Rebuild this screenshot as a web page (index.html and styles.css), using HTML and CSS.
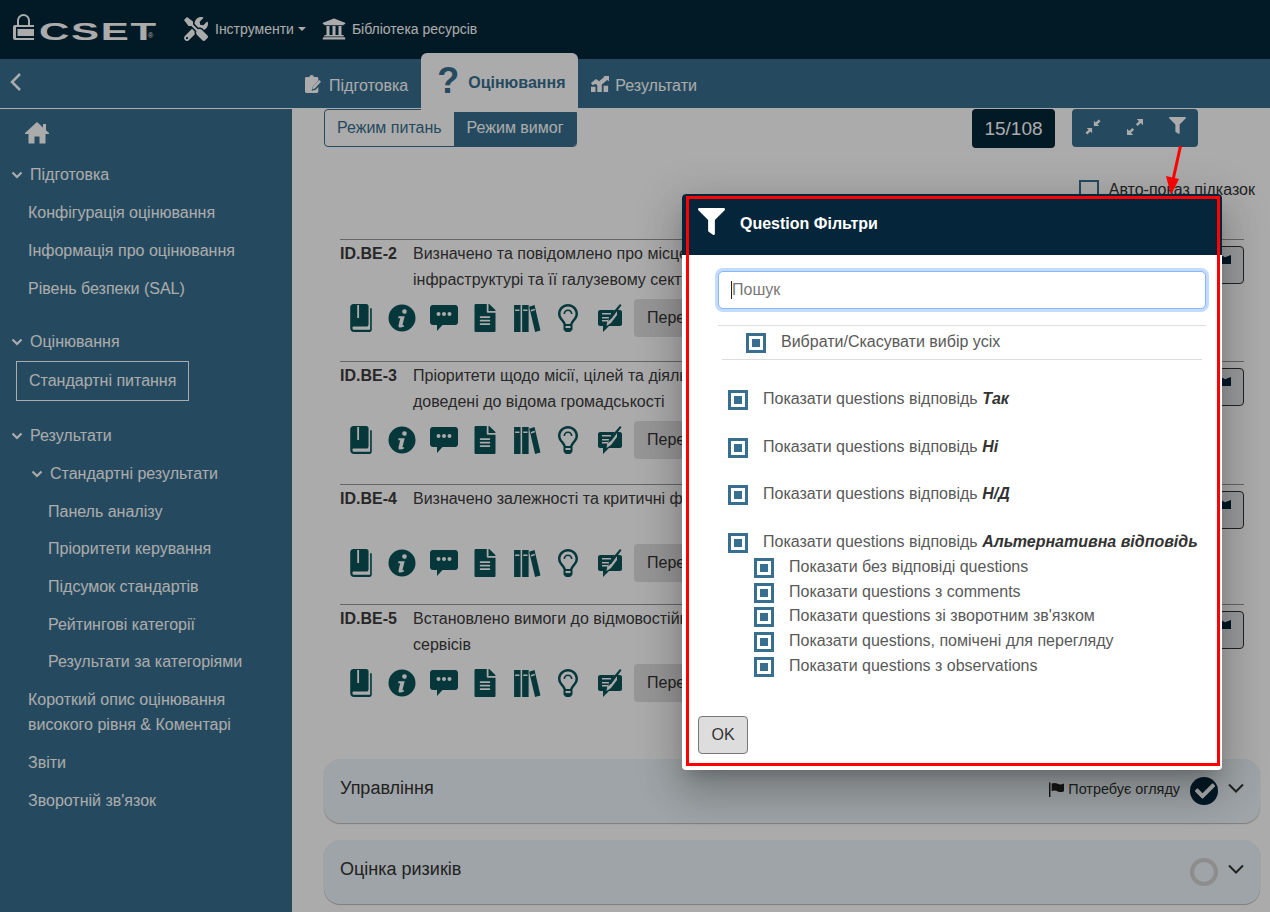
FILE: index.html
```html
<!DOCTYPE html>
<html>
<head>
<meta charset="utf-8">
<title>CSET</title>
<link rel="stylesheet" href="styles.css">
</head>
<body>

<svg class="defs" width="0" height="0">
	<symbol id="i-filter" viewBox="0 0 512 512"><path d="M487.976 0H24.028C2.71 0-8.047 25.866 7.058 40.971L192 225.941V432c0 7.831 3.821 15.17 10.237 19.662l80 55.98C298.02 518.69 320 507.493 320 487.98V225.941l184.947-184.97C520.021 25.896 509.338 0 487.976 0z"/></symbol>
	<symbol id="i-home" viewBox="0 0 24 22"><path d="M12 0l6 5.500V2h3v6.300L24 11v1h-3.500v9.500h-6V14.500h-5v7h-6V12H0v-1z"/></symbol>
	<symbol id="i-check" viewBox="0 0 512 512"><path d="M173.898 439.404l-166.4-166.4c-9.997-9.997-9.997-26.206 0-36.204l36.203-36.204c9.997-9.998 26.207-9.998 36.204 0L192 312.69 432.095 72.596c9.997-9.997 26.207-9.997 36.204 0l36.203 36.204c9.997 9.997 9.997 26.206 0 36.204l-294.4 294.401c-9.998 9.997-26.207 9.997-36.204-.001z"/></symbol>
	<symbol id="i-flag" viewBox="0 0 512 512"><path d="M0 20h50v492H0zM90 50c70-25 140-25 210 10s120 30 212-5v260c-92 35-142 40-212 5s-140-35-210-10z"/></symbol>
	<symbol id="i-tools" viewBox="0 0 512 512"><path d="M501.1 395.7L384 278.6c-23.1-23.1-57.6-27.6-85.4-13.9L192 158.1V96L64 0 0 64l96 128h62.1l106.6 106.6c-13.6 27.8-9.2 62.3 13.9 85.4l117.1 117.1c14.6 14.6 38.2 14.6 52.7 0l52.7-52.7c14.5-14.6 14.5-38.2 0-52.7zM331.7 225c28.3 0 54.9 11 74.9 31l19.4 19.4c15.8-6.9 30.8-16.5 43.8-29.5 37.1-37.1 49.7-89.3 37.9-136.7-2.2-9-13.5-12.1-20.1-5.5l-74.4 74.4-67.9-11.3L334 98.9l74.4-74.4c6.6-6.6 3.4-17.9-5.7-20.2-47.4-11.7-99.6.9-136.6 37.9-28.5 28.5-41.9 66.1-41.2 103.6l82.1 82.1c8.1-1.9 16.5-2.9 24.7-2.9zm-103.9 82l-56.7-56.7L18.7 402.8c-25 25-25 65.5 0 90.5s65.5 25 90.5 0l123.6-123.6c-7.6-19.9-9.9-41.6-5-62.7zM64 472c-13.2 0-24-10.8-24-24 0-13.3 10.7-24 24-24s24 10.7 24 24c0 13.2-10.7 24-24 24z"/></symbol>
	<symbol id="i-library" viewBox="0 0 512 512"><path d="M496 128v16a8 8 0 0 1-8 8h-24v12c0 6.627-5.373 12-12 12H60c-6.627 0-12-5.373-12-12v-12H24a8 8 0 0 1-8-8v-16a8 8 0 0 1 4.941-7.392l232-88a7.996 7.996 0 0 1 6.118 0l232 88A8 8 0 0 1 496 128zm-24 304H40c-13.255 0-24 10.745-24 24v16a8 8 0 0 0 8 8h464a8 8 0 0 0 8-8v-16c0-13.255-10.745-24-24-24zM96 192v192H60c-6.627 0-12 5.373-12 12v20h416v-20c0-6.627-5.373-12-12-12h-36V192h-64v192h-64V192h-64v192h-64V192H96z"/></symbol>
	<symbol id="i-file" viewBox="0 0 384 512"><path d="M224 136V0H24C10.7 0 0 10.7 0 24v464c0 13.3 10.7 24 24 24h336c13.3 0 24-10.7 24-24V160H248c-13.2 0-24-10.8-24-24zm64 236c0 6.6-5.4 12-12 12H108c-6.6 0-12-5.4-12-12v-8c0-6.6 5.4-12 12-12h168c6.6 0 12 5.4 12 12v8zm0-64c0 6.6-5.4 12-12 12H108c-6.6 0-12-5.4-12-12v-8c0-6.6 5.4-12 12-12h168c6.6 0 12 5.4 12 12v8zm0-72v8c0 6.6-5.4 12-12 12H108c-6.6 0-12-5.4-12-12v-8c0-6.6 5.4-12 12-12h168c6.6 0 12 5.4 12 12zm96-114.1v6.1H256V0h6.1c6.4 0 12.5 2.500 17 7l97.9 98c4.5 4.5 7 10.6 7 16.9z"/></symbol>
	<symbol id="i-book" viewBox="0 0 20 26"><path fill-rule="evenodd" d="M3 0h12c1.100 0 2 .9 2 2v17c0 1.100-.9 2-2 2H3.500c-.8 0-1.500.5-1.500 1.200S2.700 24 3.500 24H18.500V4H20v20c0 1.100-.9 2-2 2H3.500C1.500 26 0 24.500 0 22.500V3c0-1.700 1.300-3 3-3zM6.500 1v12H8.200V1z"/></symbol>
	<symbol id="i-info" viewBox="0 0 28 28"><circle cx="14" cy="14" r="13.500"/><path class="cut" d="M16.200 5.200a2.300 2.300 0 1 1-.4 4.500 2.300 2.300 0 0 1 .4-4.500zM10.500 12.200h6.200l-2.300 9h1.700l-.4 1.600c-1.200.5-2.300.7-3.300.7-1.600 0-2.200-1-1.800-2.600l1.600-6.700h-2z"/></symbol>
	<symbol id="i-comment" viewBox="0 0 28 26"><path d="M3 0h22c1.700 0 3 1.300 3 3v14c0 1.700-1.300 3-3 3H12.500L7 26v-6H3c-1.700 0-3-1.300-3-3V3c0-1.700 1.300-3 3-3z"/><circle class="cut" cx="8.500" cy="9" r="2"/><circle class="cut" cx="14" cy="9" r="2"/><circle class="cut" cx="19.500" cy="9" r="2"/></symbol>
	<symbol id="i-books" viewBox="0 0 24 26"><path d="M0 1h6v25H0zM7.500 1h6v25h-6zM14 2.500l5-1.500L24.500 24.500l-5 1.500z"/><path class="cut" d="M1 5h4v1.500H1zM8.500 5h4v1.500h-4zM15.500 5.500l3.500-1 .4 1.400-3.500 1z"/></symbol>
	<symbol id="i-bulb" viewBox="0 0 20 28"><path d="M10 0C4.500 0 0 4.400 0 9.800c0 3.400 1.800 5.300 3.300 7.100 1 1.200 1.800 2.300 2.200 3.600V25c0 .5.200.9.500 1.200l1.200 1.300c.3.300.7.500 1.100.5h3.400c.4 0 .8-.2 1.100-.5l1.200-1.300c.3-.3.500-.7.500-1.200v-4.500c.4-1.300 1.200-2.400 2.200-3.600C18.200 15.100 20 13.200 20 9.800 20 4.400 15.500 0 10 0zm2.500 24H7.500v-2h5zm2.500-8.800c-1.100 1.300-2.300 2.800-2.900 4.800H7.900c-.6-2-1.800-3.500-2.900-4.800C3.600 13.600 2.500 12.100 2.500 9.800c0-4 3.400-7.300 7.500-7.300s7.500 3.300 7.500 7.300c0 2.300-1.100 3.800-2.500 5.400z"/><path d="M5.500 10c0-2.500 2-4.500 4.500-4.500 2.500 0 4.500 2 4.500 4.500h-1.600c0-1.600-1.300-2.900-2.900-2.900S7.100 8.400 7.100 10z"/></symbol>
	<symbol id="i-note" viewBox="0 0 24 28"><path d="M2 6h15l-5 7H4v1.500h7.200L10 16H4v1.500h5.300L8.500 22l4.500-3 6-8V6h3c1 0 2 1 2 2v12c0 1-1 2-2 2H11l-6 6v-6H2c-1 0-2-1-2-2V8c0-1 1-2 2-2zM4 9v1.500h9V9z"/><path d="M22 0l1.500 1.200-10 13.300-3.300 2.700.8-4.200z"/></symbol>
	<symbol id="i-clipboard" viewBox="0 0 18 20"><path d="M1.500 2H5c.3-1.200 1.200-2 2.500-2S9.700.8 10 2h3.500c.8 0 1.500.7 1.500 1.500V6L8.500 13l-1 4.500 4.500-1 3-3v5c0 .8-.7 1.500-1.500 1.500h-12C.7 20 0 19.300 0 18.500v-15C0 2.700.7 2 1.500 2z"/><path d="M16 5.500l2 2-7 7.500-3 .8.800-3z"/></symbol>
	<symbol id="i-chart" viewBox="0 0 20 18"><path d="M0 12h5v6H0zM7 9h5v9H7zM14 11h5v7h-5z"/><path d="M0 8l5.500-4.500L9 6l6-5-1.500-1H20v6l-2-1.500-9 7.500-3.500-3L1.500 10z"/></symbol>
	<symbol id="i-compress" viewBox="0 0 18 18"><path d="M10 2v6h6l-2-2 3.500-3.500L15.500 .5 12 4zM8 16v-6H2l2 2L.5 15.500l2 2L6 14z"/></symbol>
	<symbol id="i-expand" viewBox="0 0 18 18"><path d="M18 0v7l-2.500-2.500L12 8l-2-2 3.500-3.500L11 0zM0 18v-7l2.500 2.500L6 10l2 2-3.500 3.500L7 18z"/></symbol>
</svg>

<div class="app">

	<header class="topbar">
		<a class="logo">
			<svg class="logo-lock" viewBox="0 0 21 26"><path class="logo-shackle" d="M5 11V6.500a5.500 5.500 0 0 1 11 0V11"/><path fill-rule="evenodd" d="M2 11h19v2H3v11h18v2H2c-1.100 0-2-.9-2-2V13c0-1.100.9-2 2-2zM4.500 15H21v7H4.500z"/></svg>
			<span class="logo-text">CSET</span><span class="logo-reg">®</span>
		</a>
		<a class="top-link top-link-tools"><svg class="top-icon"><use href="#i-tools"/></svg>Інструменти<i class="caret"></i></a>
		<a class="top-link"><svg class="top-icon"><use href="#i-library"/></svg>Бібліотека ресурсів</a>
	</header>

	<nav class="tabbar">
		<div class="tabbar-side">
			<svg class="back" viewBox="0 0 12 20"><path d="M10 2L2 10l8 8"/></svg>
		</div>
		<a class="tab"><svg class="tab-icon"><use href="#i-clipboard"/></svg>Підготовка</a>
		<a class="tab tab-active"><span class="tab-q">?</span>Оцінювання</a>
		<a class="tab tab-last"><svg class="tab-icon tab-icon-wide"><use href="#i-chart"/></svg>Результати</a>
	</nav>

	<div class="body">
		<aside class="sidebar">
			<svg class="home"><use href="#i-home"/></svg>
			<div class="side-group"><svg class="chev" viewBox="0 0 12 8"><path d="M1.500 1.500L6 6l4.500-4.500"/></svg>Підготовка</div>
			<a class="side-link">Конфігурація оцінювання</a>
			<a class="side-link">Інформація про оцінювання</a>
			<a class="side-link">Рівень безпеки (SAL)</a>
			<div class="side-group side-group-gap"><svg class="chev" viewBox="0 0 12 8"><path d="M1.500 1.500L6 6l4.500-4.500"/></svg>Оцінювання</div>
			<a class="side-current">Стандартні питання</a>
			<div class="side-group side-group-after"><svg class="chev" viewBox="0 0 12 8"><path d="M1.500 1.500L6 6l4.500-4.500"/></svg>Результати</div>
			<div class="side-sub"><svg class="chev" viewBox="0 0 12 8"><path d="M1.500 1.500L6 6l4.500-4.500"/></svg>Стандартні результати</div>
			<a class="side-link side-deep">Панель аналізу</a>
			<a class="side-link side-deep">Пріоритети керування</a>
			<a class="side-link side-deep">Підсумок стандартів</a>
			<a class="side-link side-deep">Рейтингові категорії</a>
			<a class="side-link side-deep">Результати за категоріями</a>
			<a class="side-link side-two">Короткий опис оцінювання високого рівня &amp; Коментарі</a>
			<a class="side-link">Звіти</a>
			<a class="side-link">Зворотній зв'язок</a>
		</aside>

		<main class="main">
			<div class="toolbar">
				<div class="modes">
					<a class="mode">Режим питань</a>
					<a class="mode mode-on">Режим вимог</a>
				</div>
				<div class="counter">15/108</div>
				<div class="tools">
					<a class="tool"><svg><use href="#i-compress"/></svg></a>
					<a class="tool"><svg><use href="#i-expand"/></svg></a>
					<a class="tool"><svg class="tool-filter"><use href="#i-filter"/></svg></a>
				</div>
			</div>

			<div class="autohint"><span class="autohint-box"></span>Авто-показ підказок</div>

			<div class="questions">
				<div class="question">
					<div class="q-left">
						<div class="q-head"><b class="q-id">ID.BE-2</b><p>Визначено та повідомлено про місце організації в критичній<br>інфраструктурі та її галузевому секторі</p></div>
						<div class="q-tools">
							<svg><use href="#i-book"/></svg><svg><use href="#i-info"/></svg><svg><use href="#i-comment"/></svg><svg><use href="#i-file"/></svg><svg><use href="#i-books"/></svg><svg><use href="#i-bulb"/></svg><svg><use href="#i-note"/></svg>
							<a class="q-review">Переглянути</a>
						</div>
					</div>
					<a class="q-mark"><i></i></a>
				</div>
				<div class="question question-tall">
					<div class="q-left">
						<div class="q-head"><b class="q-id">ID.BE-3</b><p>Пріоритети щодо місії, цілей та діяльності організації визначені та<br>доведені до відома громадськості</p></div>
						<div class="q-tools">
							<svg><use href="#i-book"/></svg><svg><use href="#i-info"/></svg><svg><use href="#i-comment"/></svg><svg><use href="#i-file"/></svg><svg><use href="#i-books"/></svg><svg><use href="#i-bulb"/></svg><svg><use href="#i-note"/></svg>
							<a class="q-review">Переглянути</a>
						</div>
					</div>
					<a class="q-mark"><i></i></a>
				</div>
				<div class="question question-short">
					<div class="q-left">
						<div class="q-head"><b class="q-id">ID.BE-4</b><p>Визначено залежності та критичні функції</p></div>
						<div class="q-tools">
							<svg><use href="#i-book"/></svg><svg><use href="#i-info"/></svg><svg><use href="#i-comment"/></svg><svg><use href="#i-file"/></svg><svg><use href="#i-books"/></svg><svg><use href="#i-bulb"/></svg><svg><use href="#i-note"/></svg>
							<a class="q-review">Переглянути</a>
						</div>
					</div>
					<a class="q-mark"><i></i></a>
				</div>
				<div class="question">
					<div class="q-left">
						<div class="q-head"><b class="q-id">ID.BE-5</b><p>Встановлено вимоги до відмовостійкості для надання критичних<br>сервісів</p></div>
						<div class="q-tools">
							<svg><use href="#i-book"/></svg><svg><use href="#i-info"/></svg><svg><use href="#i-comment"/></svg><svg><use href="#i-file"/></svg><svg><use href="#i-books"/></svg><svg><use href="#i-bulb"/></svg><svg><use href="#i-note"/></svg>
							<a class="q-review">Переглянути</a>
						</div>
					</div>
					<a class="q-mark"><i></i></a>
				</div>
			</div>

			<div class="panel panel-first">
				<span class="panel-title">Управління</span>
				<span class="panel-flag"><svg><use href="#i-flag"/></svg>Потребує огляду</span>
				<span class="panel-done"><svg><use href="#i-check"/></svg></span>
				<svg class="panel-chev" viewBox="0 0 16 10"><path d="M1 1.500l7 7 7-7"/></svg>
			</div>
			<div class="panel">
				<span class="panel-title">Оцінка ризиків</span>
				<span class="panel-open"></span>
				<svg class="panel-chev" viewBox="0 0 16 10"><path d="M1 1.500l7 7 7-7"/></svg>
			</div>
		</main>
	</div>
</div>

<div class="overlay"></div>

<svg class="arrow" viewBox="0 0 30 50"><path d="M17.500 0L10 34" stroke="#f00" stroke-width="3"/><path d="M3 30l13 3-8 16z" fill="#f00"/></svg>

<div class="modal">
	<div class="modal-head"><svg><use href="#i-filter"/></svg><span>Question Фільтри</span></div>
	<div class="modal-body">
		<div class="search"><input type="text" placeholder="Пошук"><i class="search-caret"></i></div>
		<div class="select-all">
			<label class="opt"><span class="cb"></span>Вибрати/Скасувати вибір усіх</label>
		</div>
		<div class="opts">
			<label class="opt"><span class="cb"></span>Показати questions відповідь&nbsp;<em>Так</em></label>
			<label class="opt"><span class="cb"></span>Показати questions відповідь&nbsp;<em>Ні</em></label>
			<label class="opt"><span class="cb"></span>Показати questions відповідь&nbsp;<em>Н/Д</em></label>
			<label class="opt"><span class="cb"></span>Показати questions відповідь&nbsp;<em>Альтернативна відповідь</em></label>
		</div>
		<div class="subopts">
			<label class="opt"><span class="cb"></span>Показати без відповіді questions</label>
			<label class="opt"><span class="cb"></span>Показати questions з comments</label>
			<label class="opt"><span class="cb"></span>Показати questions зі зворотним зв'язком</label>
			<label class="opt"><span class="cb"></span>Показати questions, помічені для перегляду</label>
			<label class="opt"><span class="cb"></span>Показати questions з observations</label>
		</div>
	</div>
	<button class="ok">OK</button>
	<div class="red-frame"></div>
</div>

</body>
</html>
```

FILE: styles.css
```css
* {
	margin: 0;
	padding: 0;
	box-sizing: border-box;
}

html, body {
	height: 912px;
	overflow: hidden;
}

body {
	position: relative;
	font-family: "Liberation Sans", Arial, sans-serif;
	font-size: 16px;
	color: #3c3c3c;
	background: #fff;
}

.defs {
	position: absolute;
}

.app {
	display: flex;
	flex-direction: column;
	height: 912px;
}

/* top bar */
.topbar {
	display: flex;
	align-items: center;
	height: 59px;
	flex: none;
	padding: 0 0 2px 13px;
	background: #032639;
	color: #fff;
}

.logo {
	display: flex;
	align-items: center;
	width: 171px;
	fill: #fff;
}

.logo-lock {
	width: 21px;
	height: 26px;
	margin-top: -3px;
	flex: none;
}

.logo-shackle {
	fill: none;
	stroke: #fff;
	stroke-width: 2;
}

.logo-text {
	display: inline-block;
	width: 68px;
	margin: 6px 0 0 5px;
	font-size: 24px;
	line-height: 27px;
	font-weight: bold;
	letter-spacing: 1px;
	transform: scaleX(1.75);
	transform-origin: left center;
}

.logo-reg {
	font-size: 7px;
	line-height: 8px;
	margin: 14px 0 0 41px;
}

.top-link {
	display: flex;
	align-items: center;
	font-size: 14px;
	margin-right: 16px;
}

.top-icon {
	width: 24px;
	height: 24px;
	margin-right: 7px;
	fill: #fff;
}

.top-link:last-child .top-icon {
	margin-right: 6px;
}

.caret {
	width: 0;
	height: 0;
	margin-left: 4px;
	border: 4px solid transparent;
	border-top-color: #fff;
	border-bottom: 0;
}

/* tab bar */
.tabbar {
	display: flex;
	align-items: center;
	height: 50px;
	flex: none;
	background: #386f8f;
	color: #fff;
	border-bottom: 1px solid #fff;
}

.tabbar-side {
	width: 292px;
	padding-left: 10px;
}

.back {
	display: block;
	width: 12px;
	height: 20px;
	fill: none;
	stroke: #fff;
	stroke-width: 2.500;
	margin-top: -4px;
}

.tab {
	display: flex;
	align-items: center;
	padding: 4px 13px 0 13px;
	height: 49px;
}

.tab-icon {
	width: 16px;
	height: 18px;
	margin-right: 8px;
	fill: #fff;
	margin-top: -4px;
}

.tab-icon-wide {
	width: 18px;
	margin-right: 6px;
}

.tab-active {
	position: relative;
	z-index: 1;
	align-self: flex-start;
	height: 59px;
	margin: -6px 0 -4px 0;
	width: 157px;
	padding: 0 0 0 16px;
	border-radius: 6px 6px 0 0;
	background: #fff;
	color: #386f8f;
	font-weight: bold;
}

.tab-q {
	font-size: 36px;
	line-height: 44px;
	margin: -4px 9px 0 0;
}

/* layout below the bars */
.body {
	display: flex;
	flex: 1;
	min-height: 0;
}

.sidebar {
	width: 292px;
	flex: none;
	padding: 13px 0 0;
	background: #386f8f;
	color: #fff;
}

.home {
	display: block;
	width: 24px;
	height: 22px;
	margin: 0 0 12px 25px;
	fill: #fff;
}

.chev {
	width: 12px;
	height: 8px;
	margin-right: 7px;
	fill: none;
	stroke: #fff;
	stroke-width: 2.200;
	flex: none;
}

.side-group {
	display: flex;
	align-items: center;
	height: 38px;
	padding-left: 11px;
}

.side-group-gap {
	margin-top: 15px;
}

.side-group-after {
	margin-top: 16px;
}

.side-sub {
	display: flex;
	align-items: center;
	height: 38px;
	padding-left: 31px;
}

.side-link {
	display: flex;
	align-items: center;
	height: 38px;
	padding-left: 28px;
}

.side-deep {
	height: 37.600px;
	padding-left: 48px;
}

.side-two {
	height: auto;
	padding: 6px 40px 7px 28px;
	line-height: 25px;
}

.side-current {
	display: flex;
	align-items: center;
	width: 173px;
	height: 40px;
	margin-left: 16px;
	padding-left: 12px;
	border: 1px solid #fff;
}

/* main column */
.main {
	flex: 1;
	min-width: 0;
	padding: 0 10px 0 32px;
	overflow: hidden;
}

.toolbar {
	display: flex;
	align-items: flex-start;
	height: 39px;
}

.modes {
	display: flex;
	width: 253px;
	height: 38px;
	border: 1px solid #386f8f;
	border-radius: 4px;
	overflow: hidden;
	color: #386f8f;
	margin-right: auto;
}

.mode {
	display: flex;
	align-items: center;
	padding: 0 12px 1px;
}

.mode-on {
	flex: 1;
	padding-left: 13px;
	background: #386f8f;
	color: #fff;
}

.counter {
	display: flex;
	align-items: center;
	justify-content: center;
	width: 83px;
	height: 39px;
	margin-right: 17px;
	border-radius: 4px;
	background: #032639;
	color: #fff;
	font-size: 19px;
}

.tools {
	display: flex;
	height: 38px;
	margin-right: 62px;
	border-radius: 4px;
	background: #386f8f;
}

.tool {
	display: flex;
	align-items: center;
	justify-content: center;
	width: 42px;
	padding-bottom: 2px;
}

.tool svg {
	width: 16px;
	height: 16px;
	fill: #fff;
}

.tool .tool-filter {
	width: 17px;
	height: 17px;
	margin-bottom: 3px;
}

.autohint {
	display: flex;
	align-items: center;
	justify-content: flex-end;
	height: 20px;
	margin-top: 32px;
	padding-right: 5px;
	color: #333;
}

.autohint-box {
	width: 20px;
	height: 20px;
	margin-right: 10px;
	border: 2px solid #386f8f;
}

.questions {
	margin-top: 39px;
	padding: 0 16px;
}

.question {
	display: flex;
	height: 122px;
	border-top: 1px solid #999;
}

.question-tall {
	height: 123px;
}

.question-short {
	height: 120px;
}

.q-left {
	flex: 1;
	min-width: 0;
}

.q-head {
	display: flex;
	height: 53px;
	padding-top: 1px;
	line-height: 26px;
}

.q-id {
	width: 73px;
	flex: none;
}

.q-tools {
	display: flex;
	align-items: center;
	height: 38px;
	margin-top: 6px;
}

.q-tools svg {
	width: 28px;
	height: 28px;
	margin: 0 6.750px;
	fill: #0a5358;
}

.cut {
	fill: #fff;
}

.q-review {
	display: flex;
	align-items: center;
	height: 38px;
	padding: 0 13px;
	margin-left: 3.500px;
	border-radius: 4px;
	background: #e0e0e0;
	color: #333;
}

.q-mark {
	display: flex;
	align-items: flex-start;
	justify-content: flex-end;
	width: 38px;
	height: 38px;
	margin-top: 6px;
	padding: 8px 12px 0 0;
	border: 1px solid #333;
	border-radius: 4px;
	background: #e4e7e9;
}

.q-mark i {
	width: 10px;
	height: 9px;
	background: #032639;
	clip-path: polygon(0 0, 40% 25%, 100% 0, 100% 100%, 0 100%);
}

.panel {
	display: flex;
	align-items: center;
	height: 64px;
	margin-top: 17px;
	padding: 0 16px 0 16px;
	border-radius: 16px;
	background: #ecf5f9;
	box-shadow: 0 1px 1px #bbb;
	color: #333;
}

.panel-first {
	margin-top: 33px;
}

.panel-title {
	margin: 0 auto 6px 0;
	font-size: 18px;
}

.panel-flag {
	display: flex;
	align-items: center;
	margin: 0 10px 4px 0;
	font-size: 14.400px;
}

.panel-flag svg {
	width: 15px;
	height: 15px;
	margin-right: 4px;
	fill: #222;
}

.panel-done {
	display: flex;
	align-items: center;
	justify-content: center;
	width: 28px;
	height: 28px;
	border-radius: 50%;
	background: #032639;
}

.panel-done svg {
	width: 20px;
	height: 20px;
	margin-left: 2px;
	fill: #fff;
}

.panel-open {
	width: 28px;
	height: 28px;
	border: 4px solid #d2d2d2;
	border-radius: 50%;
}

.panel-chev {
	width: 16px;
	height: 10px;
	margin: 0 0 6px 10px;
	fill: none;
	stroke: #333;
	stroke-width: 2;
}

/* dialog */
.overlay {
	position: absolute;
	z-index: 2;
	inset: 0;
	background: rgba(0, 0, 0, .33);
}

.arrow {
	position: absolute;
	z-index: 3;
	left: 1163px;
	top: 146px;
	width: 30px;
	height: 50px;
}

.modal {
	position: absolute;
	z-index: 3;
	left: 682px;
	top: 194px;
	width: 540px;
	height: 576px;
	background: #fff;
	border-radius: 4px;
	box-shadow: 0 11px 15px -7px rgba(0, 0, 0, .2), 0 24px 38px 3px rgba(0, 0, 0, .14), 0 9px 46px 8px rgba(0, 0, 0, .12);
	color: #595959;
}

.modal-head {
	display: flex;
	align-items: center;
	height: 61px;
	padding: 0 0 7px 16px;
	border-radius: 4px 4px 0 0;
	background: #05263a;
	color: #fff;
	font-weight: bold;
}

.modal-head svg {
	width: 27px;
	height: 27px;
	margin-right: 15px;
	fill: #fff;
}

.modal-head span {
	margin-top: 5px;
}

.modal-body {
	padding: 16px 16px 0 36px;
}

.search {
	position: relative;
}

.search input {
	display: block;
	width: 100%;
	height: 38px;
	padding: 0 13px;
	border: 1px solid #86b7fe;
	border-radius: 5px;
	box-shadow: 0 0 0 3px #c2dbfe;
	outline: none;
	font: 16px "Liberation Sans", Arial, sans-serif;
}

.search input::placeholder {
	color: #777;
}

.search-caret {
	position: absolute;
	left: 13px;
	top: 10px;
	width: 1px;
	height: 18px;
	background: #222;
}

.select-all {
	margin-top: 16px;
	padding: 0 4px;
	border-top: 1px solid #ddd;
}

.select-all .opt {
	height: 34px;
	padding: 7px 0 0 24px;
	border-bottom: 1px solid #ddd;
}

.opt {
	display: flex;
	align-items: flex-start;
	line-height: 18px;
}

.cb {
	width: 20px;
	height: 20px;
	flex: none;
	margin-right: 15px;
	border: 3px solid #386f8f;
	padding: 3px;
	background: #386f8f;
	background-clip: content-box;
}

.opt em {
	font-weight: bold;
	color: #333;
}

.opts {
	display: grid;
	row-gap: 27.670px;
	padding: 30px 0 0 10px;
}

.subopts {
	display: grid;
	row-gap: 4.750px;
	padding: 5px 0 0 36px;
}

.ok {
	position: absolute;
	left: 16px;
	bottom: 16px;
	width: 50px;
	height: 38px;
	border: 1px solid #777;
	border-radius: 4px;
	background: #ddd;
	color: #333;
	font: 16px "Liberation Sans", Arial, sans-serif;
}

.red-frame {
	position: absolute;
	left: 4px;
	right: 2px;
	top: 2px;
	bottom: 4px;
	border: 3px solid #f00;
}
```
